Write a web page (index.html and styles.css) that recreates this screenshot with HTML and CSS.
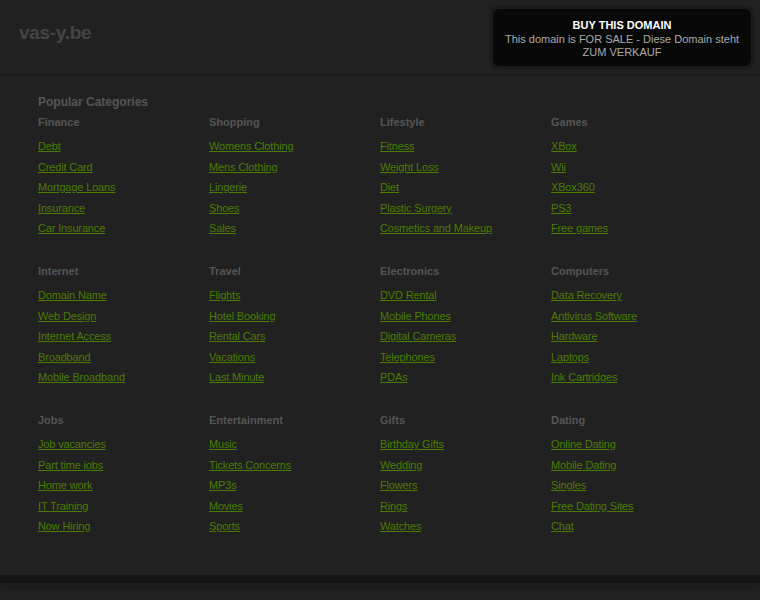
FILE: index.html
```html
<!DOCTYPE html>
<html lang="en">
<head>
    <meta charset="UTF-8">
    <title>vas-y.be</title>
    <link rel="stylesheet" href="styles.css">
</head>
<body>
    <div class="header">
        <div class="logo">vas-y.be</div>
        <div class="sale-box">
            <div class="sale-title">BUY THIS DOMAIN</div>
            <div class="sale-text">This domain is FOR SALE - Diese Domain steht ZUM VERKAUF</div>
        </div>
    </div>

    <div class="content">
        <h2>Popular Categories</h2>
        <div class="grid">
            <div class="cat">
                <h3>Finance</h3>
                <a href="#">Debt</a>
                <a href="#">Credit Card</a>
                <a href="#">Mortgage Loans</a>
                <a href="#">Insurance</a>
                <a href="#">Car Insurance</a>
            </div>
            <div class="cat">
                <h3>Shopping</h3>
                <a href="#">Womens Clothing</a>
                <a href="#">Mens Clothing</a>
                <a href="#">Lingerie</a>
                <a href="#">Shoes</a>
                <a href="#">Sales</a>
            </div>
            <div class="cat">
                <h3>Lifestyle</h3>
                <a href="#">Fitness</a>
                <a href="#">Weight Loss</a>
                <a href="#">Diet</a>
                <a href="#">Plastic Surgery</a>
                <a href="#">Cosmetics and Makeup</a>
            </div>
            <div class="cat">
                <h3>Games</h3>
                <a href="#">XBox</a>
                <a href="#">Wii</a>
                <a href="#">XBox360</a>
                <a href="#">PS3</a>
                <a href="#">Free games</a>
            </div>

            <div class="cat">
                <h3>Internet</h3>
                <a href="#">Domain Name</a>
                <a href="#">Web Design</a>
                <a href="#">Internet Access</a>
                <a href="#">Broadband</a>
                <a href="#">Mobile Broadband</a>
            </div>
            <div class="cat">
                <h3>Travel</h3>
                <a href="#">Flights</a>
                <a href="#">Hotel Booking</a>
                <a href="#">Rental Cars</a>
                <a href="#">Vacations</a>
                <a href="#">Last Minute</a>
            </div>
            <div class="cat">
                <h3>Electronics</h3>
                <a href="#">DVD Rental</a>
                <a href="#">Mobile Phones</a>
                <a href="#">Digital Cameras</a>
                <a href="#">Telephones</a>
                <a href="#">PDAs</a>
            </div>
            <div class="cat">
                <h3>Computers</h3>
                <a href="#">Data Recovery</a>
                <a href="#">Antivirus Software</a>
                <a href="#">Hardware</a>
                <a href="#">Laptops</a>
                <a href="#">Ink Cartridges</a>
            </div>

            <div class="cat">
                <h3>Jobs</h3>
                <a href="#">Job vacancies</a>
                <a href="#">Part time jobs</a>
                <a href="#">Home work</a>
                <a href="#">IT Training</a>
                <a href="#">Now Hiring</a>
            </div>
            <div class="cat">
                <h3>Entertainment</h3>
                <a href="#">Music</a>
                <a href="#">Tickets Concerns</a>
                <a href="#">MP3s</a>
                <a href="#">Movies</a>
                <a href="#">Sports</a>
            </div>
            <div class="cat">
                <h3>Gifts</h3>
                <a href="#">Birthday Gifts</a>
                <a href="#">Wedding</a>
                <a href="#">Flowers</a>
                <a href="#">Rings</a>
                <a href="#">Watches</a>
            </div>
            <div class="cat">
                <h3>Dating</h3>
                <a href="#">Online Dating</a>
                <a href="#">Mobile Dating</a>
                <a href="#">Singles</a>
                <a href="#">Free Dating Sites</a>
                <a href="#">Chat</a>
            </div>
        </div>
    </div>
    <div class="footer-edge"></div>
</body>
</html>
```

FILE: styles.css
```css
body {
    margin: 0;
    background-color: #212121;
    font-family: "Liberation Sans", Arial, sans-serif;
    font-size: 11px;
}
.header {
    height: 74px;
    border-bottom: 2px solid #1a1a1a;
    display: flex;
    justify-content: space-between;
    align-items: flex-start;
}
.logo {
    margin: 22px 0 0 19px;
    font-size: 19px;
    font-weight: bold;
    color: #444;
    letter-spacing: -0.3px;
}
.sale-box {
    margin: 7px 7px 0 0;
    width: 262px;
    height: 61px;
    box-sizing: border-box;
    padding: 10px 8px 0;
    background-color: #080808;
    border: 2px solid #1b1b1b;
    border-radius: 8px;
    box-shadow: 0 0 3px #111;
    text-align: center;
}
.sale-title {
    color: #fff;
    font-weight: bold;
    font-size: 11px;
    margin-bottom: 2px;
}
.sale-text {
    color: #aaa;
    font-size: 11px;
    line-height: 13px;
}
.content {
    height: 499px;
    padding: 19px 0 0 38px;
    box-sizing: border-box;
}
h2 {
    margin: 0 0 7px;
    font-size: 12px;
    color: #555;
}
.grid {
    display: grid;
    grid-template-columns: repeat(4, 171px);
    row-gap: 26.5px;
}
.cat h3 {
    margin: 0 0 8px;
    font-size: 11px;
    color: #555;
}
.cat a {
    display: block;
    width: fit-content;
    color: #4a7c00;
    line-height: 20.5px;
    letter-spacing: -0.15px;
}
.footer-edge {
    height: 8px;
    background-color: #141414;
    border-radius: 0 0 6px 6px;
    border-bottom: 7px solid #1c1c1c;
}
```
